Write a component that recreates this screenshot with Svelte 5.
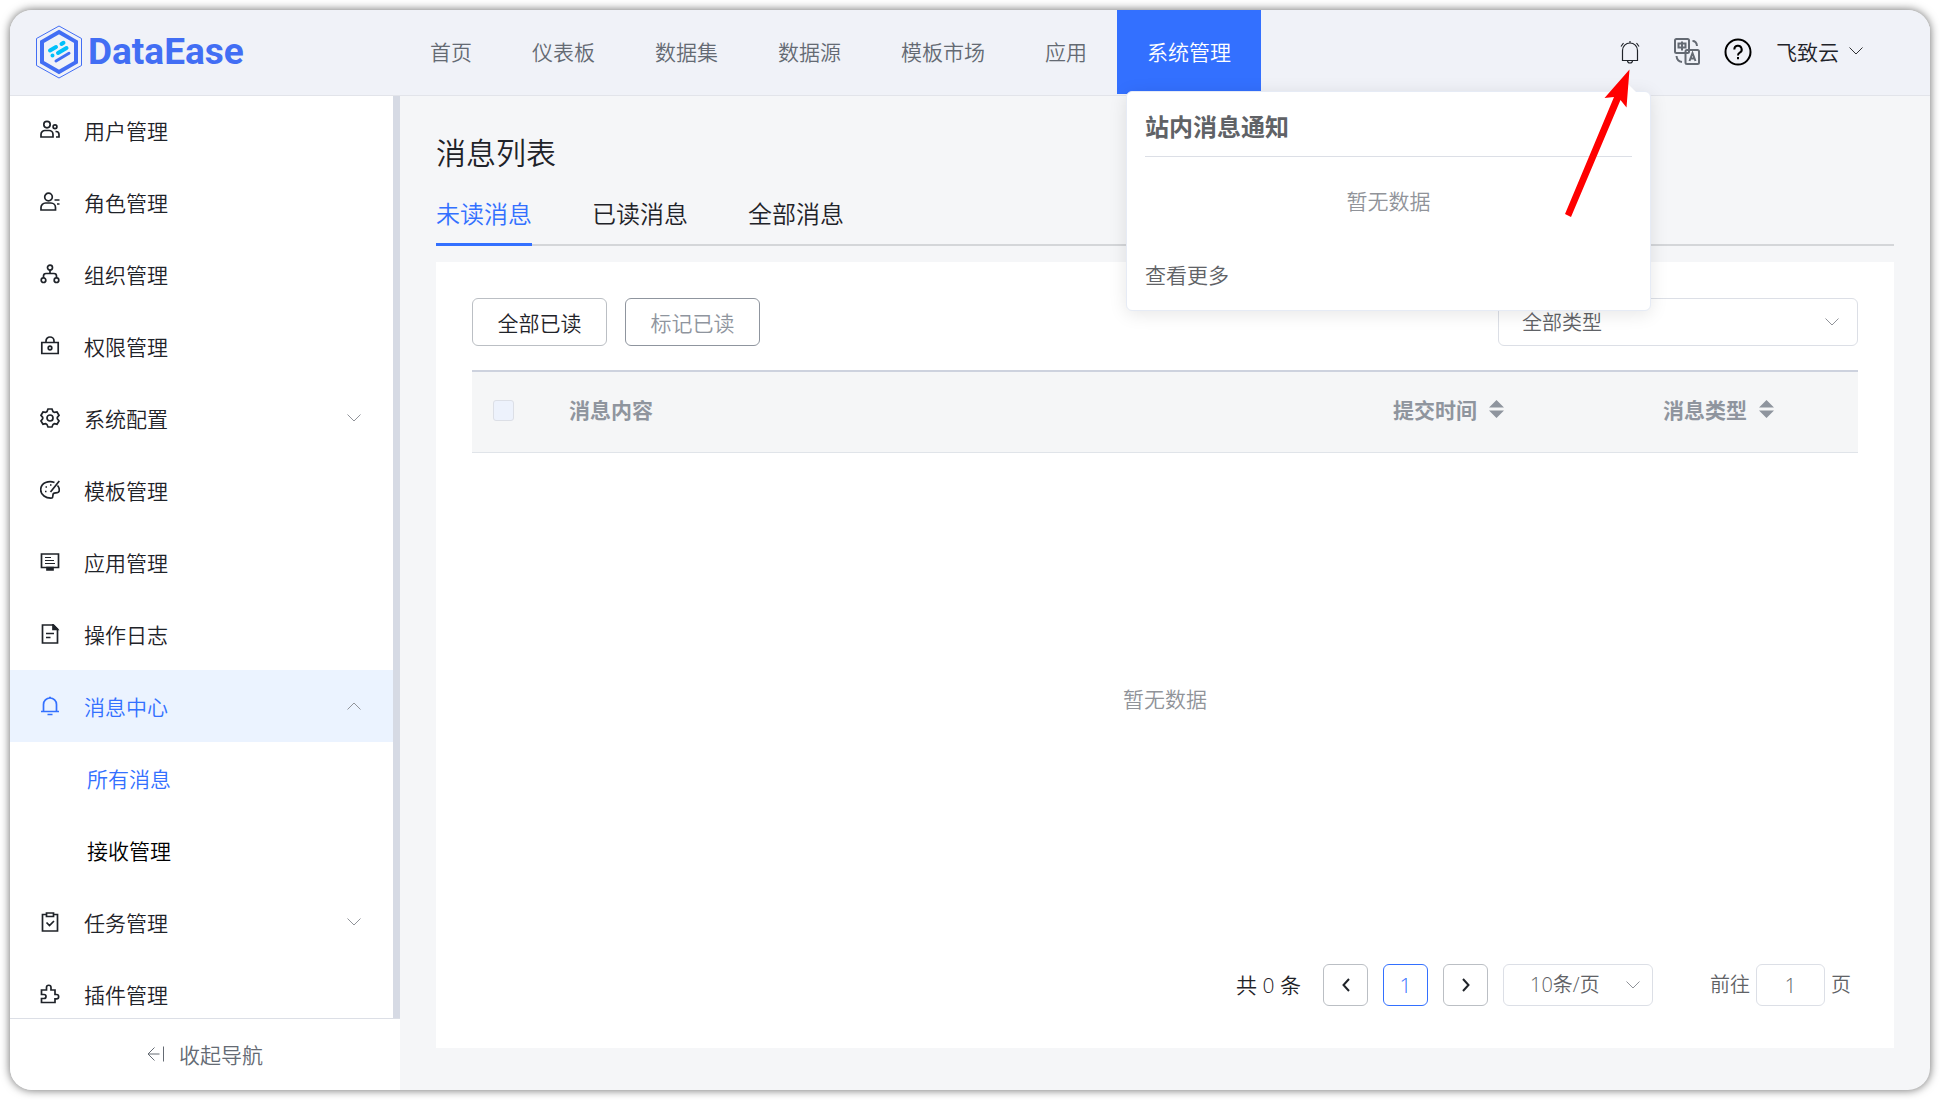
<script lang="ts">
  const topNav = ["首页", "仪表板", "数据集", "数据源", "模板市场", "应用", "系统管理"];
  const activeNav = "系统管理";

  const menu = [
    { icon: "users", label: "用户管理" },
    { icon: "role", label: "角色管理" },
    { icon: "org", label: "组织管理" },
    { icon: "lock", label: "权限管理" },
    { icon: "gear", label: "系统配置", arrow: "down" },
    { icon: "palette", label: "模板管理" },
    { icon: "screen", label: "应用管理" },
    { icon: "log", label: "操作日志" },
    {
      icon: "bell",
      label: "消息中心",
      arrow: "up",
      active: true,
      children: ["所有消息", "接收管理"],
    },
    { icon: "task", label: "任务管理", arrow: "down" },
    { icon: "plugin", label: "插件管理" },
  ];
  const activeChild = "所有消息";

  const tabs = ["未读消息", "已读消息", "全部消息"];
  let activeTab = $state("未读消息");
  let page = $state("1");
</script>

{#snippet chevron(dir)}
  <svg class="chevron {dir}" viewBox="0 0 14 8" width="14" height="8">
    <path d="M0.5 0.5 7 7 13.5 0.5" />
  </svg>
{/snippet}

{#snippet menuIcon(name)}
  <svg class="icon" viewBox="0 0 20 20" width="20" height="20">
    {#if name == "users"}
      <circle cx="7" cy="4.6" r="3.2" />
      <path d="M1 17v-2.5a4 4 0 0 1 4-4h4a4 4 0 0 1 4 4V17z" />
      <circle cx="15" cy="6.8" r="1.9" />
      <path d="M15.5 11.5h.5a3 3 0 0 1 3 3V17h-3" />
    {:else if name == "role"}
      <circle cx="8.5" cy="5" r="3.8" />
      <path d="M1 18v-2.5a4.5 4.5 0 0 1 4.5-4.5h5.500a4.500 4.500 0 0 1 4.500 4.500V18zM14.500 8h5M17 12h2.500" />
    {:else if name == "org"}
      <circle cx="10" cy="3.6" r="2.5" />
      <path d="M10 6v4M3.500 14v-2q0-2.500 2.500-2.500h8q2.500 0 2.500 2.500v2" />
      <circle cx="3.5" cy="16.2" r="2.3" />
      <circle cx="16.5" cy="16.2" r="2.3" />
    {:else if name == "lock"}
      <path d="M1.800 6.500h16.400v11H1.800zM6 6.500V5a4 4 0 0 1 8 0v1.500" />
      <circle cx="10" cy="12" r="1.8" />
    {:else if name == "gear"}
      <path d="M8 1h4l1 2.600 1.400.8L17 4l2 3.300L17.300 9.400v1.400L19 12.900 17 16.200l-2.700-.5-1.300.8L12 19H8l-1-2.500-1.300-.8-2.700.5-2-3.300 1.700-2.100V9.400L1 7.300 3 4l2.600.4L7 3.600z" />
      <circle cx="10" cy="10" r="3" />
    {:else if name == "palette"}
      <path d="M14.500 2.500C9 .2 1 2.500.700 9.500.500 15 6 18.500 12 18c1.500-.5.300-3.500 1.500-4.500 1.500-1.200 5.500.5 5.800-3 .1-1.800-.6-3.700-1.800-5" />
      <path d="M19.300 1 10.500 12" />
      <path d="M5 11.500h1.500M5.500 7H7M10 5h1.500" />
    {:else if name == "screen"}
      <path d="M1.500 2h17v13.500h-17z" />
      <path class="thin" d="M5 5.500h6M5 8.500h9M5 11.500h10" />
      <path class="fill" d="M7 15.500h6V18H7z" />
    {:else if name == "log"}
      <path d="M2.500 1h11l4 4v14h-15z" />
      <path class="fill" d="M13 1v4.500h4.500z" />
      <path d="M6 9.500h8M6 13.500h4.500" />
    {:else if name == "bell"}
      <path d="M3.500 15.500V8.500a6.500 6.500 0 0 1 13 0v7M1 15.500h18M7.500 18.500h5M9 1.500h2" />
    {:else if name == "task"}
      <path d="M6.500 2.500h-4V19h15V2.500h-4M6.500 1h7v3.500h-7zM6.500 10.500l3 3 4.500-4.500" />
    {:else if name == "plugin"}
      <path d="M1.500 6h5V3.500a2 2 0 0 1 4.500 0V6h4v4.500h1.500a2 2 0 0 1 0 4.300H15v3.700H1.500v-4H4a1.800 1.800 0 0 0 0-4H1.500z" />
    {/if}
  </svg>
{/snippet}

{#snippet sortIcon()}
  <svg class="sort" viewBox="0 0 15 18" width="15" height="18">
    <path d="M7.500 0 15 7.500H0zM7.500 18 0 10.500h15z" />
  </svg>
{/snippet}

<div class="app">
  <header class="topbar">
    <a class="logo" href="#home">
      <svg viewBox="0 0 46 54" width="46" height="54">
        <path class="outline" d="M23 1 45.500 13.500v27L23 53 .5 40.500v-27z" />
        <path class="hex" d="M23 7 40 16.800v20.400L23 47 6 37.200V16.800z" />
        <path class="cyan" d="M14 25.500l6-3.500M25.500 19l2-1.200M22 28l8.500-5M16.500 30.600h.01" />
        <path class="bar" d="M20 36l13-7.700" />
      </svg>
      <span>DataEase</span>
    </a>
    <nav class="nav">
      {#each topNav as item}
        <a href="#{item}" class:active={item == activeNav}>{item}</a>
      {/each}
    </nav>
    <div class="tools">
      <button class="tool notice" aria-label="站内消息">
        <svg viewBox="0 0 20 24" width="20" height="24">
          <path d="M2.500 20.500V10.500a7.500 7.500 0 0 1 15 0v10zM7.500 20.500q0 2.500 2.500 2.500t2.500-2.500M10 3V1M1 6.500l2.500-3.500M19 6.500l-2.500-3.500" />
        </svg>
      </button>
      <button class="tool lang" aria-label="语言">
        <svg viewBox="0 0 26 28" width="26" height="28">
          <rect x="1" y="1" width="14" height="14" rx="1.5" />
          <rect x="11.5" y="12" width="13.5" height="14" rx="1.5" />
          <path d="M4.500 5.500h7v4h-7zM8 3.500v9M18.500 3q4 0 4.500 5M2.500 18q.5 5.500 5.500 6" />
          <path d="M15.500 23l3-8 3 8M16.500 20.500h4" />
        </svg>
      </button>
      <button class="tool help" aria-label="帮助">
        <svg viewBox="0 0 28 28" width="28" height="28">
          <circle cx="14" cy="14" r="12.5" />
          <path d="M10.300 11.500a3.700 3.700 0 1 1 5.500 3.200q-1.800 1-1.800 2.800M14 19v2.300" />
        </svg>
      </button>
      <button class="tool user">飞致云 {@render chevron("down")}</button>
    </div>

    <section class="popover">
      <h2>站内消息通知</h2>
      <p>暂无数据</p>
      <a href="#more">查看更多</a>
    </section>
    <svg class="pointer" viewBox="0 0 68 150" width="68" height="150">
      <path d="M65.500 .5 62.500 38.500 56.500 31 7 148 1 145 50 28 40.500 29z" />
    </svg>
  </header>

  <div class="body">
    <aside class="sidebar">
      <ul class="menu">
        {#each menu as item}
          <li>
            <a href="#{item.icon}" class="entry" class:active={item.active}>
              {@render menuIcon(item.icon)}
              <span>{item.label}</span>
              {#if item.arrow}
                {@render chevron(item.arrow)}
              {/if}
            </a>
            {#if item.children}
              {#each item.children as child}
                <a href="#{child}" class="entry child" class:current={child == activeChild}>{child}</a>
              {/each}
            {/if}
          </li>
        {/each}
      </ul>
      <button class="collapse">
        <svg viewBox="0 0 18 16" width="18" height="16">
          <path d="M12.500 8H1M7.500 1.500 1 8l6.500 6.500M16.500 .5v15" />
        </svg>
        收起导航
      </button>
    </aside>

    <main class="content">
      <h1>消息列表</h1>
      <div class="tabs" role="tablist">
        {#each tabs as tab}
          <button
            role="tab"
            aria-selected={tab == activeTab}
            class:active={tab == activeTab}
            onclick={() => (activeTab = tab)}>{tab}</button
          >
        {/each}
      </div>

      <div class="panel">
        <div class="toolbar">
          <button class="btn">全部已读</button>
          <button class="btn disabled" disabled>标记已读</button>
          <div class="select type">
            <select aria-label="消息类型">
              <option>全部类型</option>
            </select>
            {@render chevron("down")}
          </div>
        </div>

        <table>
          <thead>
            <tr>
              <th class="check"><input type="checkbox" aria-label="全选" disabled /></th>
              <th>消息内容</th>
              <th class="time"><span>提交时间 {@render sortIcon()}</span></th>
              <th class="kind"><span>消息类型 {@render sortIcon()}</span></th>
            </tr>
          </thead>
        </table>
        <div class="empty">暂无数据</div>

        <div class="pagination">
          <span class="total">共 0 条</span>
          <button class="page" aria-label="上一页">
            <svg viewBox="0 0 8 14" width="8" height="14"><path d="M7 1 1.500 7 7 13" /></svg>
          </button>
          <button class="page active">1</button>
          <button class="page" aria-label="下一页">
            <svg viewBox="0 0 8 14" width="8" height="14"><path d="M1 1l5.500 6L1 13" /></svg>
          </button>
          <div class="select size">
            <select aria-label="每页条数">
              <option>10条/页</option>
            </select>
            {@render chevron("down")}
          </div>
          <label class="jump">前往 <input type="text" bind:value={page} /> 页</label>
        </div>
      </div>
    </main>
  </div>
</div>

<style>
  :global(body) {
    background: #fff;
  }
  .app {
    box-sizing: border-box;
    display: flex;
    flex-direction: column;
    height: calc(100vh - 20px);
    margin: 10px;
    border-radius: 22px;
    overflow: hidden;
    background: #f5f6f8;
    box-shadow: 0 0 10px rgba(0, 0, 0, 0.6);
    color: #1f2329;
    font: 350 21px/30px "Noto Sans CJK SC", sans-serif;
  }
  .app :global(*) {
    box-sizing: border-box;
  }
  a {
    color: inherit;
    text-decoration: none;
  }
  button,
  input,
  select {
    margin: 0;
    padding: 0;
    border: none;
    background: none;
    color: inherit;
    font: inherit;
  }
  svg {
    flex: none;
    fill: none;
    stroke: currentColor;
  }

  .topbar {
    position: relative;
    z-index: 1;
    flex: none;
    display: flex;
    align-items: stretch;
    height: 84px;
    background: #f0f2f8;
    box-shadow: 0 1px #f0f2f8, 0 2px #e2e4ea;
  }
  .logo {
    display: flex;
    align-items: center;
    gap: 6px;
    width: 390px;
    padding-left: 26px;
    color: #426ef4;
    font: 700 37px/40px Roboto, sans-serif;
  }
  .outline {
    stroke-width: 1;
  }
  .hex {
    stroke-width: 4;
  }
  .cyan {
    stroke: #00c0fa;
    stroke-width: 4;
    stroke-linecap: round;
  }
  .bar {
    stroke-width: 3;
    stroke-linecap: round;
  }
  .nav {
    display: flex;
    color: #646a73;
    line-height: 82px;
  }
  .nav a {
    padding: 0 30px;
  }
  .nav a.active {
    background: #3370ff;
    color: #fff;
  }
  .tools {
    display: flex;
    align-items: center;
    gap: 24px;
    margin-left: auto;
    padding-right: 67px;
  }
  .tool {
    display: flex;
    align-items: center;
  }
  .notice {
    margin-right: 10px;
  }
  .notice svg {
    stroke: #1f2329;
    stroke-width: 1.2;
  }
  .lang {
    color: #646a73;
  }
  .lang svg {
    stroke-width: 2;
  }
  .help svg {
    stroke: #000;
    stroke-width: 2;
  }
  .user {
    gap: 10px;
    padding-bottom: 2px;
  }

  .popover {
    position: absolute;
    top: 81px;
    right: 279px;
    width: 525px;
    height: 220px;
    padding: 16px 18px;
    border: 1px solid #e6ebf5;
    border-radius: 6px;
    background: #fff;
    box-shadow: 0 3px 18px rgba(0, 0, 0, 0.1);
    color: #606266;
  }
  .popover::before {
    content: "";
    position: absolute;
    top: -8px;
    right: 14px;
    border: 8px solid transparent;
    border-top: none;
    border-bottom-color: #fff;
  }
  .popover h2 {
    margin: 0;
    padding-bottom: 12px;
    border-bottom: 1px solid #dcdfe6;
    font-size: 24px;
    font-weight: 700;
    line-height: 36px;
  }
  .popover p {
    margin: 28px 0 44px;
    color: #909399;
    text-align: center;
  }
  .pointer {
    position: absolute;
    top: 59px;
    right: 298px;
    stroke: none;
    fill: #f00;
  }

  .body {
    flex: 1;
    display: flex;
    min-height: 0;
  }
  .sidebar {
    flex: none;
    display: flex;
    flex-direction: column;
    width: 390px;
    background: #fff;
  }
  .menu {
    flex: 1;
    min-height: 0;
    margin: 0;
    padding: 0;
    overflow: hidden;
    border-right: 7px solid #d6dae4;
    list-style: none;
  }
  .entry {
    display: flex;
    align-items: center;
    height: 72px;
    padding: 0 32px 0 30px;
  }
  .entry .icon {
    margin-right: 24px;
    stroke-width: 1.7;
  }
  .entry .thin {
    stroke-width: 1;
  }
  .entry .fill {
    fill: currentColor;
  }
  .entry.active {
    background: #ebf3ff;
  }
  .entry.active,
  .entry.current {
    color: #3370ff;
  }
  .entry.child {
    padding-left: 77px;
  }
  .entry.child:not(.current) {
    color: #000;
  }
  .chevron {
    color: #909399;
  }
  .chevron.up {
    transform: rotate(180deg);
  }
  .entry .chevron {
    margin-left: auto;
  }
  .user .chevron {
    color: #303133;
  }
  .collapse {
    display: flex;
    align-items: center;
    justify-content: center;
    gap: 14px;
    height: 72px;
    padding-bottom: 2px;
    border-top: 1px solid #dcdfe6;
    color: #646a73;
  }

  .content {
    flex: 1;
    display: flex;
    flex-direction: column;
    padding: 36px 36px 42px;
  }
  h1 {
    margin: 0;
    font-size: 30px;
    font-weight: 350;
    line-height: 42px;
  }
  .tabs {
    display: flex;
    gap: 60px;
    height: 74px;
    margin-bottom: 16px;
    border-bottom: 2px solid #d4d6d9;
  }
  .tabs button {
    height: 74px;
    padding-top: 10px;
    border-bottom: 3px solid transparent;
    font-size: 24px;
    line-height: 36px;
  }
  .tabs .active {
    border-color: #3370ff;
    color: #3370ff;
  }
  .panel {
    flex: 1;
    display: flex;
    flex-direction: column;
    padding: 36px 36px 42px;
    background: #fff;
  }
  .toolbar {
    display: flex;
    gap: 18px;
    margin-bottom: 24px;
  }
  .btn {
    width: 135px;
    height: 48px;
    border: 1px solid #bbbfc4;
    border-radius: 6px;
  }
  .btn.disabled {
    border-color: #8f959e;
    color: #8f959e;
  }
  .select {
    display: flex;
    align-items: center;
    border: 1px solid #dcdfe6;
    border-radius: 6px;
    color: #606266;
    font-size: 20px;
  }
  .select select {
    flex: 1;
    height: 100%;
    appearance: none;
    outline: none;
  }
  .select .chevron {
    pointer-events: none;
  }
  .type {
    width: 360px;
    height: 48px;
    margin-left: auto;
    padding: 0 18px 0 23px;
  }

  table {
    width: 100%;
    border-collapse: collapse;
    table-layout: fixed;
    background: #f5f6f7;
    color: #8f959e;
  }
  thead tr {
    height: 81px;
    border-top: 2px solid #cdd2de;
    border-bottom: 1px solid #e0e4e9;
  }
  th {
    padding: 0 0 6px;
    font-weight: 700;
    text-align: left;
  }
  th span {
    display: flex;
    align-items: center;
    gap: 12px;
  }
  .check {
    width: 97px;
    padding: 0 0 2px 21px;
  }
  .check input {
    display: block;
    width: 21px;
    height: 21px;
    border: 1px solid #dcdfe6;
    border-radius: 3px;
    background: #edf2fc;
    appearance: none;
  }
  .time {
    width: 270px;
  }
  .kind {
    width: 195px;
  }
  .sort {
    fill: #8f959e;
    stroke: none;
  }
  .empty {
    flex: 1;
    display: flex;
    align-items: center;
    justify-content: center;
    padding-bottom: 20px;
    color: #909399;
  }

  .pagination {
    display: flex;
    align-items: center;
    justify-content: flex-end;
    gap: 15px;
    padding-right: 7px;
    font-family: "Open Sans", "Noto Sans CJK SC", sans-serif;
  }
  .total {
    margin-right: 7px;
  }
  .page {
    display: flex;
    align-items: center;
    justify-content: center;
    width: 45px;
    height: 42px;
    border: 1px solid #bbbfc4;
    border-radius: 6px;
  }
  .page svg {
    stroke-width: 2;
  }
  .page.active {
    border-color: #3370ff;
    color: #3370ff;
  }
  .size {
    width: 150px;
    height: 42px;
    padding: 0 12px 0 26px;
  }
  .jump {
    display: flex;
    align-items: center;
    gap: 6px;
    margin-left: 42px;
    color: #606266;
    font-size: 20px;
  }
  .jump input {
    width: 69px;
    height: 42px;
    border: 1px solid #dcdfe6;
    border-radius: 6px;
    text-align: center;
  }
</style>
